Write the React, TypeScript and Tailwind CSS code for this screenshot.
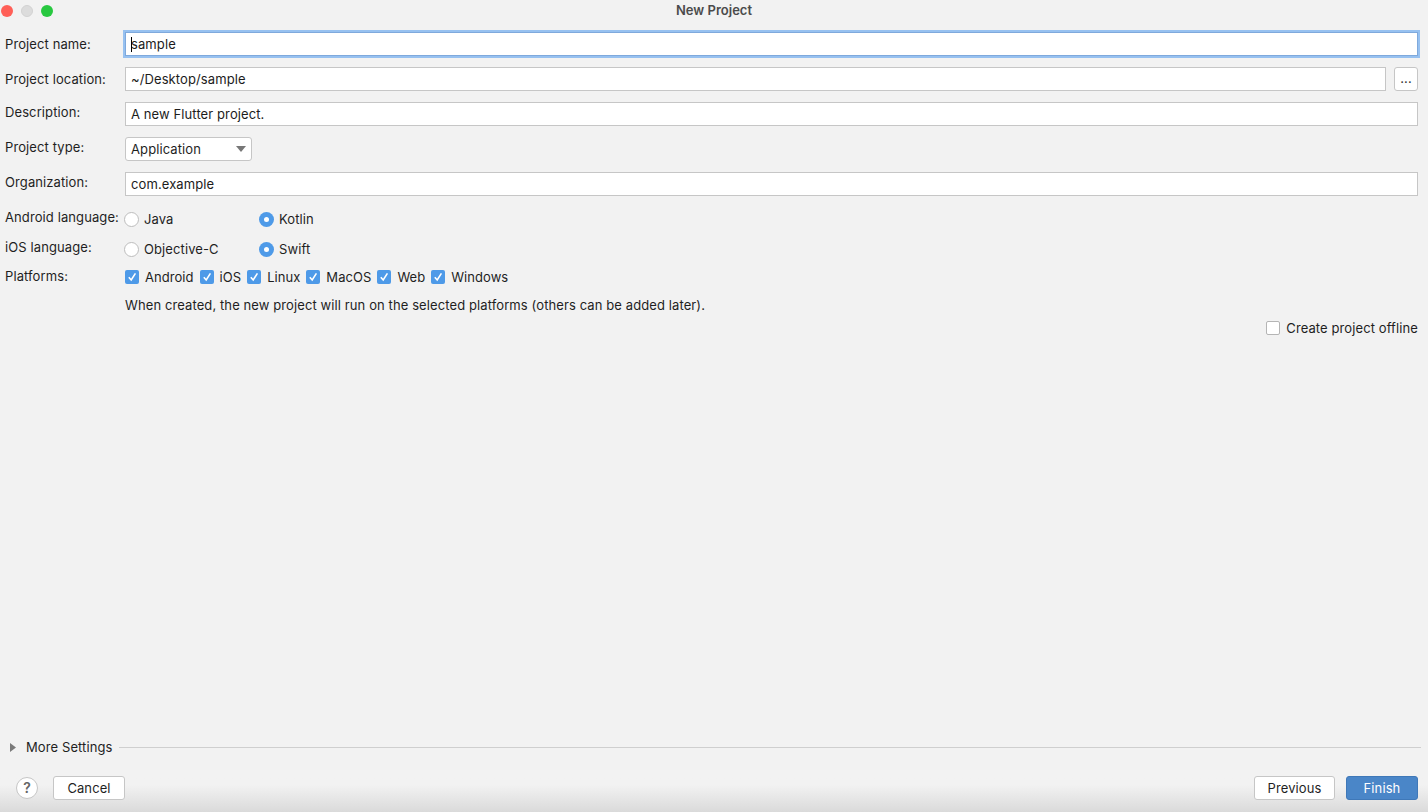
import React from 'react';

const font = "font-['Inter','Liberation_Sans',sans-serif]";

function Field({ label, children, raised = true }: { label: string; children: React.ReactNode; raised?: boolean }) {
  return (
    <div className="flex items-center h-6">
      <label className={`w-[120px] shrink-0 ${raised ? 'pb-[2px]' : 'pt-[2px]'}`}>{label}</label>
      {children}
    </div>
  );
}

function TextBox({ value }: { value: string }) {
  return (
    <div className="flex-1 h-6 bg-white border border-[#c6c6c6] px-[5px] pt-[2px] flex items-center text-[#1c1c1c]">{value}</div>
  );
}

function Radio({ label, checked, className }: { label: string; checked?: boolean; className?: string }) {
  return (
    <div className={`flex items-center gap-[5px] ${className}`}>
      {checked ? (
        <span className="w-[15px] h-[15px] rounded-full bg-[#4e9ae8] flex items-center justify-center">
          <span className="w-[5px] h-[5px] rounded-full bg-white" />
        </span>
      ) : (
        <span className="w-[15px] h-[15px] rounded-full bg-white border-[1.5px] border-[#bdbdbd]" />
      )}
      <span className="pt-[2px]">{label}</span>
    </div>
  );
}

function Check({ label }: { label: string }) {
  return (
    <div className="flex items-center gap-[6px]">
      <span className="w-[14px] h-[14px] rounded-[2px] bg-[#4e9ae8] flex items-center justify-center">
        <svg width="10" height="10" viewBox="0 0 10 10" fill="none">
          <path d="M1.8 5.2 L4.2 8 L8.4 1.4" stroke="white" strokeWidth="1.6" />
        </svg>
      </span>
      <span className="pt-[2px] tracking-[0.05px]">{label}</span>
    </div>
  );
}

export default function App() {
  return (
    <div className={`${font} h-screen w-full flex flex-col bg-[#f2f2f2] text-[13px] tracking-[0.1px] text-[#1f1f1f] overflow-hidden`}>
      <header className="h-[21px] shrink-0 relative flex items-center justify-center">
        <div className="absolute left-[1px] top-[5px] flex gap-2">
          <span className="w-3 h-3 rounded-full bg-[#ff5f57]" />
          <span className="w-3 h-3 rounded-full bg-[#dcdcdc] border border-[#d2d2d2]" />
          <span className="w-3 h-3 rounded-full bg-[#28c840]" />
        </div>
        <span className="font-semibold text-[#4b4b4b] text-[13px] tracking-normal">New Project</span>
      </header>

      <main className="pl-[5px] pr-[10px] pt-[11px] flex flex-col">
        <Field label="Project name:" raised={false}>
          <div className="relative flex-1 h-6 bg-white border border-[#7fa9dc] shadow-[0_0_0_2px_#97c1f0] px-[5px] pt-[2px] flex items-center text-[#1c1c1c]">
            <span className="absolute left-[5px] top-1 w-px h-[15px] bg-black" />
            sample
          </div>
        </Field>

        <div className="mt-[11px]">
          <Field label="Project location:" raised={false}>
            <TextBox value="~/Desktop/sample" />
            <button type="button" className="ml-2 w-6 h-6 bg-white border border-[#c6c6c6] rounded-[3px] text-[#333]">
              ...
            </button>
          </Field>
        </div>

        <div className="mt-[11px]">
          <Field label="Description:">
            <TextBox value="A new Flutter project." />
          </Field>
        </div>

        <div className="mt-[11px]">
          <Field label="Project type:">
            <div className="w-[127px] h-6 bg-white border border-[#c6c6c6] rounded-[3px] pl-[5px] pr-[5px] flex items-center justify-between">
              <span className="pt-[2px]">Application</span>
              <svg width="10" height="6" viewBox="0 0 10 6">
                <path d="M0 0 H10 L5 6 Z" fill="#777" />
              </svg>
            </div>
          </Field>
        </div>

        <div className="mt-[11px]">
          <Field label="Organization:">
            <TextBox value="com.example" />
          </Field>
        </div>

        <div className="mt-[11px]">
          <Field label="Android language:">
            <Radio label="Java" className="w-[135px] -ml-[1px]" />
            <Radio label="Kotlin" checked />
          </Field>
        </div>

        <div className="mt-[6px]">
          <Field label="iOS language:">
            <Radio label="Objective-C" className="w-[135px] -ml-[1px]" />
            <Radio label="Swift" checked />
          </Field>
        </div>

        <div className="mt-[6px] flex items-center h-5">
          <label className="w-[120px] shrink-0">Platforms:</label>
          <div className="flex items-center gap-[6px]">
            <Check label="Android" />
            <Check label="iOS" />
            <Check label="Linux" />
            <Check label="MacOS" />
            <Check label="Web" />
            <Check label="Windows" />
          </div>
        </div>

        <p className="mt-[7px] h-5 leading-5 pt-px pl-[120px]">
          When created, the new project will run on the selected platforms (others can be added later).
        </p>

        <div className="mt-[4px] h-5 flex items-center justify-end gap-[6px]">
          <span className="w-[14px] h-[14px] rounded-[2px] bg-white border border-[#b5b5b5]" />
          <span className="pt-[2px]">Create project offline</span>
        </div>
      </main>

      <div className="flex-1" />

      <div className="h-5 pl-[10px] pr-[7px] flex items-center gap-[6px] mb-[19px]">
        <svg width="6" height="9" viewBox="0 0 6 9" className="mr-[4px]">
          <path d="M0 0 L6 4.5 L0 9 Z" fill="#7a7a7a" />
        </svg>
        <span className="pt-[2px]">More Settings</span>
        <div className="flex-1 h-px bg-[#cfcfcf]" />
      </div>

      <footer className="h-[36px] pl-4 pr-[10px] flex items-start justify-between bg-gradient-to-b from-[#f2f2f2] via-[#f2f2f2] via-25% to-[#dadada]">
        <div className="flex items-center gap-[15px]">
          <button type="button" className="w-[22px] h-[22px] rounded-full bg-white border border-[#c6c6c6] text-[#666] font-semibold text-[14px] leading-none">
            ?
          </button>
          <button type="button" className="w-[72px] h-6 pt-[2px] bg-white border border-[#c6c6c6] rounded-[3px]">
            Cancel
          </button>
        </div>
        <div className="flex items-center gap-[11px]">
          <button type="button" className="w-[81px] h-6 pt-[2px] bg-white border border-[#c6c6c6] rounded-[3px]">
            Previous
          </button>
          <button type="button" className="w-[72px] h-6 pt-[2px] bg-[#4a86c8] border border-[#3f78b8] rounded-[3px] text-white">
            Finish
          </button>
        </div>
      </footer>
    </div>
  );
}
